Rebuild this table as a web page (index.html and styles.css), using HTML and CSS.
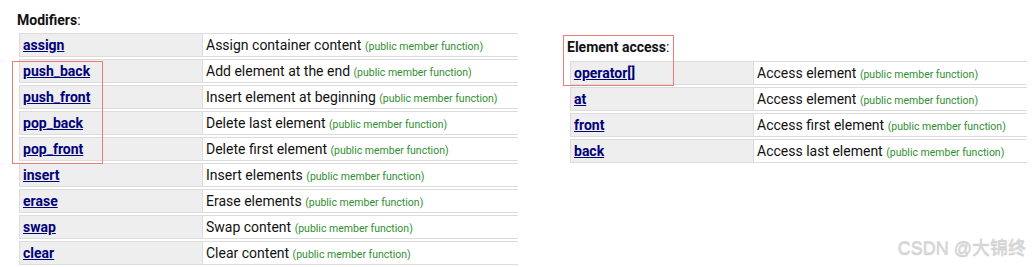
FILE: index.html
```html
<!DOCTYPE html>
<html lang="en">
<head>
    <meta charset="UTF-8">
    <meta name="viewport" content="width=device-width, initial-scale=1.0">
    <title>deque members</title>
    <link rel="stylesheet" href="styles.css">
</head>
<body>
    <div class="page">
        <section class="group group-modifiers">
            <h3 class="group-title"><b>Modifiers</b>:</h3>
            <table class="members">
                <tr><td class="name"><a href="#">assign</a></td><td class="desc">Assign container content <span class="kind">(public member function)</span></td></tr>
                <tr><td class="name"><a href="#">push_back</a></td><td class="desc">Add element at the end <span class="kind">(public member function)</span></td></tr>
                <tr><td class="name"><a href="#">push_front</a></td><td class="desc">Insert element at beginning <span class="kind">(public member function)</span></td></tr>
                <tr><td class="name"><a href="#">pop_back</a></td><td class="desc">Delete last element <span class="kind">(public member function)</span></td></tr>
                <tr><td class="name"><a href="#">pop_front</a></td><td class="desc">Delete first element <span class="kind">(public member function)</span></td></tr>
                <tr><td class="name"><a href="#">insert</a></td><td class="desc">Insert elements <span class="kind">(public member function)</span></td></tr>
                <tr><td class="name"><a href="#">erase</a></td><td class="desc">Erase elements <span class="kind">(public member function)</span></td></tr>
                <tr><td class="name"><a href="#">swap</a></td><td class="desc">Swap content <span class="kind">(public member function)</span></td></tr>
                <tr><td class="name"><a href="#">clear</a></td><td class="desc">Clear content <span class="kind">(public member function)</span></td></tr>
            </table>
        </section>

        <section class="group group-access">
            <h3 class="group-title"><b>Element access</b>:</h3>
            <table class="members">
                <tr><td class="name"><a href="#">operator[]</a></td><td class="desc">Access element <span class="kind">(public member function)</span></td></tr>
                <tr><td class="name"><a href="#">at</a></td><td class="desc">Access element <span class="kind">(public member function)</span></td></tr>
                <tr><td class="name"><a href="#">front</a></td><td class="desc">Access first element <span class="kind">(public member function)</span></td></tr>
                <tr><td class="name"><a href="#">back</a></td><td class="desc">Access last element <span class="kind">(public member function)</span></td></tr>
            </table>
        </section>
    </div>

    <!-- annotation boxes drawn over the screenshot -->
    <div class="mark mark-push-pop"></div>
    <div class="mark mark-operator"></div>

    <div class="watermark">CSDN @大锦终</div>
</body>
</html>
```

FILE: styles.css
```css
:root {
    --link-color: #00007a;
    --kind-color: #2f8f2f;
    --cell-border: #dcdcdc;
    --name-bg: #eeeeee;
    --mark-color: #ef7a7a;
}

body {
    margin: 0;
    padding: 0;
    background: #ffffff;
    color: #111;
    font-family: Roboto, "Liberation Sans", Arial, sans-serif;
    position: relative;
    height: 267px;
    overflow: hidden;
}

.page {
    display: flex;
    gap: 49px;
    padding-left: 17px;
}

.group-modifiers {
    padding-top: 12px;
}

.group-access {
    padding-top: 39px;
}

.group-title {
    margin: 0 0 2px;
    font-size: 14px;
    font-weight: normal;
    line-height: 17px;
}

.group-access .group-title {
    margin-bottom: 3px;
}

.group-title b {
    font-weight: bold;
}

.members {
    border-collapse: separate;
    border-spacing: 0 2px;
    margin-left: 2px;
}

.group-modifiers .members {
    width: 499px;
}

.group-access .members {
    width: 457px;
    margin-left: 3px;
}

.members td {
    box-sizing: border-box;
    height: 24px;
    padding: 0 3px;
    line-height: 20px;
    border-top: 1px solid var(--cell-border);
    border-bottom: 1px solid var(--cell-border);
    white-space: nowrap;
    vertical-align: middle;
}

.members .name {
    width: 184px;
    background: var(--name-bg);
    border-left: 1px solid var(--cell-border);
    border-right: 1px solid var(--cell-border);
}

.members .name a {
    color: var(--link-color);
    font-size: 14px;
    font-weight: bold;
    text-decoration: underline;
}

.members .desc {
    font-size: 14px;
    color: #111;
}

.kind {
    font-size: 10.5px;
    line-height: 1;
    color: var(--kind-color);
}

.mark {
    position: absolute;
    border: 1px solid var(--mark-color);
    box-sizing: border-box;
}

.mark-push-pop {
    left: 12px;
    top: 61px;
    width: 91px;
    height: 103px;
}

.mark-operator {
    left: 563px;
    top: 35px;
    width: 111px;
    height: 51px;
}

.watermark {
    position: absolute;
    right: 6px;
    bottom: 8px;
    font-size: 18px;
    color: #d8d8d8;
    text-shadow: 0 1px 1px rgba(0, 0, 0, 0.22);
    font-family: "Liberation Sans", "Noto Sans CJK SC", sans-serif;
}
```
